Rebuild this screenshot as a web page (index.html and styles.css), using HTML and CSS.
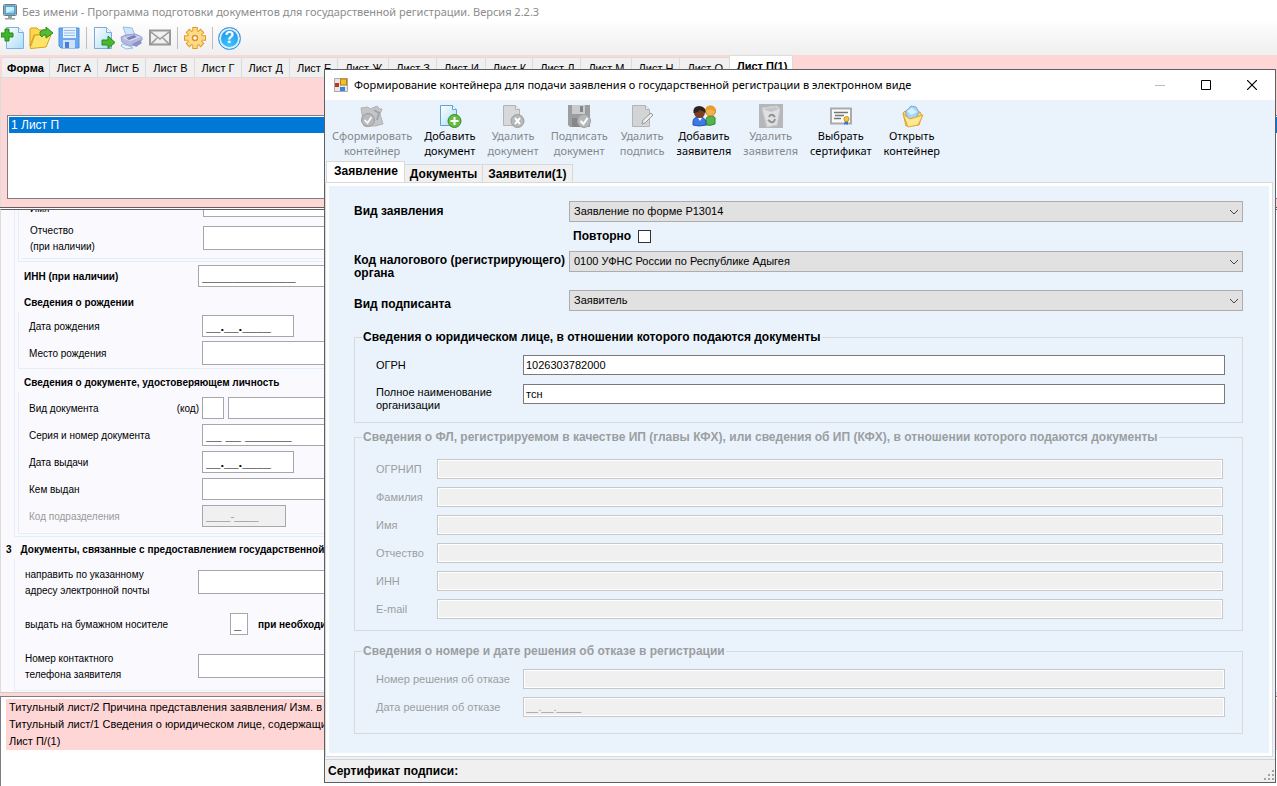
FILE: index.html
```html
<!DOCTYPE html>
<html lang="ru">
<head>
<meta charset="utf-8">
<title>Программа подготовки документов для государственной регистрации</title>
<link rel="stylesheet" href="styles.css">
</head>
<body>
<main class="window">
  <header class="titlebar">
    <svg width="16" height="16" viewBox="0 0 16 16"><rect x="1.500" y=".5" width="13" height="11" rx="1" fill="#d9dde0" stroke="#74797d"/><rect x="3" y="2" width="10" height="8" fill="#8fd3f5" stroke="#2778ad"/><path d="M4 3h8v3l-8 3z" fill="#c9effd"/><path d="M6 12h4v2h3v1.500H3V14h3z" fill="#9ba1a5"/></svg>
    <span>Без имени - Программа подготовки документов для государственной регистрации. Версия 2.2.3</span>
  </header>

  <nav class="toolbar">
    <button aria-label="Создать"><svg width="24" height="24" viewBox="0 0 24 24"><defs><linearGradient id="page" x2="1" y2="1"><stop offset="0" stop-color="#fff"/><stop offset="1" stop-color="#a9dcf6"/></linearGradient></defs><path d="M5.500 1.500h12l5 5v16h-17z" fill="url(#page)" stroke="#79b3dd"/><path d="M17.500 1.500v5h5" fill="#e9f6fd" stroke="#79b3dd"/><path d="M4 3h4v4h4v4H8v4H4v-4H0V7h4z" fill="#43b52d" stroke="#248a1a"/></svg></button>
    <button aria-label="Открыть"><svg width="24" height="24" viewBox="0 0 24 24"><path d="M1 3l1-1h6l2 2h8v5H5L1 20z" fill="#ffd84d" stroke="#d99a12"/><path d="M1 22L6 9h16l-5 12-15 1.500z" fill="#ffe46a" stroke="#dca017"/><path d="M11 6c3-3 5-2 6-2V1l7 6-7 5V9c-2 0-3 0-4 2-2-1-2-3-2-5z" fill="#55bb35" stroke="#2c8a1d"/></svg></button>
    <button aria-label="Сохранить"><svg width="24" height="24" viewBox="0 0 24 24"><path d="M2 2h20v20H4l-2-2z" fill="#6ba8f2" stroke="#4f8edc"/><rect x="6" y="2" width="13" height="10" fill="#e8f3ff"/><path d="M7 4.500h11M7 7h11M7 9.500h11" stroke="#96bce8"/><rect x="6" y="14" width="12" height="8" fill="#cfe1fa"/><rect x="8" y="16" width="4" height="6" fill="#4c7fd0"/></svg></button>
    <i class="sep"></i>
    <button aria-label="Экспорт"><svg width="24" height="24" viewBox="0 0 24 24"><path d="M2.500 1.500h12l5 5v16h-17z" fill="url(#page)" stroke="#79a9dd"/><path d="M14.500 1.500v5h5" fill="#e9f6fd" stroke="#79b3dd"/><path d="M10 14h6v-4l7 6.500-7 6V19h-6z" fill="#48b92e" stroke="#268c1a"/></svg></button>
    <button aria-label="Печать"><svg width="24" height="24" viewBox="0 0 24 24"><path d="M3 1l9 1 3 7-8 3z" fill="#cfe5fb" stroke="#9abde6"/><path d="M1 11l5-2 9-1 5 2q3 1 2 4l-5 5-8 1-7-4z" fill="#b4b9e2" stroke="#989dcc"/><path d="M2 12l8 3 11-4-7-2z" fill="#d6daf3"/><path d="M6 12l8-3 3 2-8 3z" fill="#7a80b4"/><path d="M2 18l7 2 4 2-7 1-5-3z" fill="#edf4ff" stroke="#9abde6"/><path d="M12 18l8-4 2 3-6 4z" fill="#8a92c8"/></svg></button>
    <button aria-label="Отправить"><svg width="24" height="24" viewBox="0 0 24 24"><rect x="2" y="4.500" width="20" height="14" fill="#f0f0f0" stroke="#989898" stroke-width="2"/><path d="M3 6l9 7 9-7M3 18l6-6M21 18l-6-6" fill="none" stroke="#999" stroke-width="1.500"/></svg></button>
    <i class="sep"></i>
    <button aria-label="Настройки"><svg width="24" height="24" viewBox="0 0 24 24"><g stroke="#e09a26" stroke-width="5.500"><path d="M12 1v22M1 12h22M4.500 4.500l15 15M19.500 4.500l-15 15"/></g><g stroke="#ffd77c" stroke-width="3.500"><path d="M12 2v20M2 12h20M5.200 5.200l13.600 13.600M18.800 5.200L5.200 18.800"/></g><circle cx="12" cy="12" r="7" fill="#ffdc8a"/><circle cx="12" cy="12" r="2.500" fill="#fff" stroke="#d9942a" stroke-width="1.500"/></svg></button>
    <i class="sep"></i>
    <button class="help" aria-label="Справка"><span>?</span></button>
  </nav>

  <section class="pages">
    <div class="sheet-tabs">
      <button class="bold">Форма</button><button>Лист А</button><button>Лист Б</button><button>Лист В</button><button>Лист Г</button><button>Лист Д</button><button>Лист Е</button><button>Лист Ж</button><button>Лист З</button><button>Лист И</button><button>Лист К</button><button>Лист Л</button><button>Лист М</button><button>Лист Н</button><button>Лист О</button><button class="bold current">Лист П(1)</button>
    </div>
    <div class="sheet-area">
      <ul class="sheet-list"><li>1 Лист П</li></ul>
    </div>
  </section>

  <form class="form-panel">
    <div class="frame person">
      <div class="frame name-frame">
        <div class="frame name-inner">
          <div class="row first"><label for="fn">Имя</label><input id="fn"></div>
          <div class="row tall"><label for="mn">Отчество<br>(при наличии)</label><input id="mn"></div>
        </div>
      </div>
      <div class="row inn"><label for="inn" class="strong">ИНН (при наличии)</label><input id="inn" class="mask long" value="____________"></div>
      <h3>Сведения о рождении</h3>
      <div class="frame birth">
        <div class="row"><label for="bd">Дата рождения</label><input id="bd" class="mask date" value="__.__.____"></div>
        <div class="row tall"><label for="bp">Место рождения</label><input id="bp"></div>
      </div>
      <h3>Сведения о документе, удостоверяющем личность</h3>
      <div class="frame doc">
        <div class="row"><label for="dt">Вид документа <span>(код)</span></label><input id="dt" class="code"><input aria-label="Наименование документа"></div>
        <div class="row"><label for="sn">Серия и номер документа</label><input id="sn" class="mask long" value="__ __ ______"></div>
        <div class="row"><label for="dd">Дата выдачи</label><input id="dd" class="mask date" value="__.__.____"></div>
        <div class="row"><label for="by">Кем выдан</label><input id="by"></div>
        <div class="row off"><label for="dc">Код подразделения</label><input id="dc" class="dept" value="____-____" disabled></div>
      </div>
    </div>
    <h3 class="numbered"><span>3</span>Документы, связанные с предоставлением государственной услуги</h3>
    <div class="frame delivery">
      <div class="row tall"><label for="em">направить по указанному<br>адресу электронной почты</label><input id="em"></div>
      <div class="row paper"><label for="pp">выдать на бумажном носителе</label><input id="pp" class="flag mask" value="_"><b>при необходимости</b></div>
      <div class="row tall"><label for="ph">Номер контактного<br>телефона заявителя</label><input id="ph"></div>
    </div>
  </form>

  <section class="errors">
    <ul>
      <li>Титульный лист/2 Причина представления заявления/ Изм. в учредительный документ</li>
      <li>Титульный лист/1 Сведения о юридическом лице, содержащиеся в ЕГРЮЛ</li>
      <li>Лист П/(1)</li>
    </ul>
  </section>
</main>

<div class="dialog" role="dialog" aria-labelledby="dlg-title">
  <header class="dlg-title">
    <svg width="14" height="14" viewBox="0 0 14 14"><path d="M.5.5h13v13H.5z" fill="#e6e6e6" stroke="#aaa"/><rect x="1" y="5" width="4" height="4" fill="#c93420"/><rect x="6.500" y="1" width="6" height="6" fill="#f5bf2a" stroke="#b98208"/><rect x="6" y="9" width="5" height="4" fill="#3f7fe8"/></svg>
    <span id="dlg-title">Формирование контейнера для подачи заявления о государственной регистрации в электронном виде</span>
    <div class="win-buttons">
      <button aria-label="Свернуть" disabled><svg width="10" height="10"><path d="M0 5.500h10" stroke="#bdbdbd"/></svg></button>
      <button aria-label="Развернуть"><svg width="10" height="10"><path d="M.5.5h9v9h-9z" fill="none" stroke="#000"/></svg></button>
      <button aria-label="Закрыть"><svg width="10" height="10"><path d="M0 0l10 10M10 0L0 10" stroke="#000" stroke-width="1.200"/></svg></button>
    </div>
  </header>

  <nav class="actions">
    <button disabled><svg width="24" height="24" viewBox="0 0 24 24"><path d="M1 4l7-1 2 2 7-3 3 3h2l-2 5 3 10-8 2H4z" fill="#c3c5c8" stroke="#b0b2b5"/><path d="M14 6l5 3-2 7" fill="none" stroke="#a2a4a7" stroke-width="2"/><circle cx="8" cy="16" r="6.500" fill="#b7b9bc" stroke="#999b9e"/><path d="M4.500 16l3 3 4-6" fill="none" stroke="#f4f4f4" stroke-width="2"/></svg>Сформировать<br>контейнер</button>
    <button><svg width="24" height="24" viewBox="0 0 24 24"><path d="M2.500 1.500h12l4 4v16h-16z" fill="url(#page)" stroke="#5ba5d2"/><path d="M14.500 1.500v4h4" fill="#fff" stroke="#5ba5d2"/><circle cx="16.500" cy="17" r="6.500" fill="#66bd3e" stroke="#338b2b"/><path d="M16.500 13v8M12.500 17h8" stroke="#fff" stroke-width="2"/></svg>Добавить<br>документ</button>
    <button disabled><svg width="24" height="24" viewBox="0 0 24 24"><path d="M2.500 1.500h12l4 4v16h-16z" fill="#d6d8da" stroke="#b2b4b6"/><path d="M14.500 1.500v4h4" fill="#eee" stroke="#b2b4b6"/><circle cx="16.500" cy="17" r="6.500" fill="#b5b7b9" stroke="#9c9ea0"/><path d="M14 14l5 6M19 14l-5 6" stroke="#fff" stroke-width="2"/></svg>Удалить<br>документ</button>
    <button disabled><svg width="24" height="24" viewBox="0 0 24 24"><path d="M1 1h22v22H3l-2-2z" fill="#9b9d9f"/><path d="M5 1h13v9H5z" fill="#c9cbcd"/><path d="M13 2h3v6h-3zM5 14h11v9H5z" fill="#858789"/><circle cx="17" cy="17" r="6.500" fill="#b5b7b9" stroke="#a0a2a4"/><path d="M13.500 17l3 3 4-6" fill="none" stroke="#fff" stroke-width="2"/></svg>Подписать<br>документ</button>
    <button disabled><svg width="24" height="24" viewBox="0 0 24 24"><path d="M2.500 1.500h13l4 4v17h-17z" fill="#d2d4d6" stroke="#b2b4b6"/><path d="M15.500 1.500v4h4" fill="#eee" stroke="#b2b4b6"/><path d="M12 20l1-4 8-7 2 2-8 8z" fill="#eee" stroke="#98999b"/></svg>Удалить<br>подпись</button>
    <button><svg width="24" height="24" viewBox="0 0 24 24"><path d="M14 21v-5q0-4 5-4t4 4v4q-4 2-9 1" fill="#55b54a" stroke="#2d8a30"/><circle cx="18.500" cy="7" r="5" fill="#f2b254" stroke="#c97a1c"/><path d="M13.500 7q0-6 6-5 5 1 4 6-5-4-10-1" fill="#e9a02a"/><path d="M1 21v-3q0-5 6-5t7 5v3q-7 2-13 0" fill="#3c7ae8" stroke="#2150b5"/><circle cx="7.500" cy="8.500" r="5.500" fill="#7c3f22"/><path d="M1.500 9q-1-7 6-7 7 1 6 7-2-2-6-3-2 3-6 3" fill="#2c221e"/><path d="M6 14l2 3 2-3z" fill="#fff"/></svg>Добавить<br>заявителя</button>
    <button disabled><svg width="24" height="24" viewBox="0 0 24 24"><path d="M0 0h24v24H0z" fill="#b5b7b9"/><path d="M3 4l15-2 3 3-3 16-10 2z" fill="#dfe0e1" stroke="#cacccd"/><path d="M4 5l8 3 8-3-3-2z" fill="#c2c4c6"/><path d="M10 13q1-3 4-2l2 2M16 15q-1 4-4 3l-3-2" fill="none" stroke="#8f9193" stroke-width="2"/></svg>Удалить<br>заявителя</button>
    <button><svg width="24" height="24" viewBox="0 0 24 24"><path d="M2 4.500h20v15H2z" fill="#fafafa" stroke="#a9abad" stroke-width="2"/><path d="M5 8.500h14M6 11.500h9M5 14.500h7" stroke="#737578" stroke-width="1.500"/><path d="M16 16l-1 5 2-1 2 1v-5z" fill="#3671d5"/><circle cx="17.500" cy="15" r="2.500" fill="#f6c738" stroke="#c8971f"/></svg>Выбрать<br>сертификат</button>
    <button><svg width="24" height="24" viewBox="0 0 24 24"><path d="M3 9l2-2 5 2 10-1 2 4-3 9-13 1z" fill="#f9d66a" stroke="#d9a32a"/><path d="M6 7l5-5 5 1 3 5-3 6-6 1-4-4z" fill="#a7d5f7" stroke="#74abdc"/><path d="M7 7l5-3 5 4-6 3z" fill="#d9f0ff"/><path d="M3 10l7 5 13-4-5 10-10 2z" fill="#ffe892" stroke="#dca936"/></svg>Открыть<br>контейнер</button>
  </nav>

  <div class="dlg-tabs">
    <button class="current">Заявление</button><button>Документы</button><button>Заявители(1)</button>
  </div>

  <form class="dlg-page">
    <div class="top-fields">
      <label for="kind">Вид заявления</label>
      <div class="select"><select id="kind"><option>Заявление по форме P13014</option></select><svg width="10" height="6"><path d="M1 1l4 4 4-4" fill="none" stroke="#444"/></svg></div>
      <label class="again">Повторно <input type="checkbox"></label>
      <label for="organ" class="organ-label">Код налогового (регистрирующего) органа</label>
      <div class="select organ"><select id="organ"><option>0100 УФНС России по Республике Адыгея</option></select><svg width="10" height="6"><path d="M1 1l4 4 4-4" fill="none" stroke="#444"/></svg></div>
      <label for="signer" class="signer">Вид подписанта</label>
      <div class="select"><select id="signer"><option>Заявитель</option></select><svg width="10" height="6"><path d="M1 1l4 4 4-4" fill="none" stroke="#444"/></svg></div>
    </div>

    <fieldset class="wide-labels">
      <legend>Сведения о юридическом лице, в отношении которого подаются документы</legend>
      <div class="field"><label for="ogrn">ОГРН</label><input id="ogrn" value="1026303782000"></div>
      <div class="field"><label for="org" class="two-line">Полное наименование организации</label><input id="org" value="тсн"></div>
    </fieldset>

    <fieldset class="person-set" disabled>
      <legend>Сведения о ФЛ, регистрируемом в качестве ИП (главы КФХ), или сведения об ИП (КФХ), в отношении которого подаются документы</legend>
      <div class="field"><label for="p1">ОГРНИП</label><input id="p1"></div>
      <div class="field"><label for="p2">Фамилия</label><input id="p2"></div>
      <div class="field"><label for="p3">Имя</label><input id="p3"></div>
      <div class="field"><label for="p4">Отчество</label><input id="p4"></div>
      <div class="field"><label for="p5">ИНН</label><input id="p5"></div>
      <div class="field"><label for="p6">E-mail</label><input id="p6"></div>
    </fieldset>

    <fieldset class="wide-labels refusal" disabled>
      <legend>Сведения о номере и дате решения об отказе в регистрации</legend>
      <div class="field"><label for="r1">Номер решения об отказе</label><input id="r1"></div>
      <div class="field"><label for="r2">Дата решения об отказе</label><input id="r2" value="__.__.____"></div>
    </fieldset>
  </form>

  <footer class="status">
    <span>Сертификат подписи:</span>
    <svg width="12" height="12" fill="#a3a3a3"><path d="M9 0h2v2H9zM5 4h2v2H5zM9 4h2v2H9zM1 8h2v2H1zM5 8h2v2H5zM9 8h2v2H9z"/></svg>
  </footer>
</div>
</body>
</html>
```
FILE: styles.css
```css
* { box-sizing: border-box; }
body {
  margin: 0;
  position: relative;
  min-height: 100vh;
  overflow: hidden;
  background: #fff;
  color: #000;
  font: 11px/14px "Liberation Sans", Arial, sans-serif;
}
button, input, select { font: inherit; color: inherit; }
button { margin: 0; padding: 0; border: 0; background: none; }
ul { margin: 0; padding: 0; list-style: none; }
svg { display: block; flex: none; }

/* main window */
.window { display: flex; flex-direction: column; min-height: 100vh; }
.titlebar {
  display: flex; align-items: center; gap: 4px;
  height: 23px; padding-left: 2px;
  color: #8c8c8c;
  font-family: "Noto Sans", "Open Sans", sans-serif;
  white-space: nowrap;
}
.toolbar {
  display: flex; align-items: center; gap: 4px;
  height: 32px; padding: 0 0 2px 1px;
  background: linear-gradient(#fdfdfd, #efefef);
}
.sep { width: 1px; height: 22px; margin: 0 1px; background: #bdbdbd; }
.help {
  width: 23px; height: 23px;
  border: 1px solid #3f93e0; border-radius: 50%;
  background: radial-gradient(circle at 50% 80%, #38c6fa, #1f86e6);
  box-shadow: inset 0 0 0 2px #d7efff;
  color: #fff;
  font-size: 16px; font-weight: bold; line-height: 20px;
}
.pages { padding-top: 1px; background: #ffd6d6; border-bottom: 1px solid #5f5f5f; }
.sheet-tabs { display: flex; align-items: flex-end; height: 21px; padding-left: 2px; white-space: nowrap; }
.sheet-tabs button {
  height: 20px; padding: 1px 6px 0 7px;
  background: #f0f0f0;
  border: 1px solid #dcdcdc; border-width: 1px 1px 0 0;
}
.sheet-tabs .bold { padding: 1px 5px 0; font-weight: bold; }
.sheet-tabs .current { height: 22px; padding: 0 5px 2px 7px; background: #fff; }
.sheet-area { padding: 37px 0 8px 6px; border-left: 1px solid #dcdcdc; border-top: 1px solid #dcdcdc; }
.sheet-list {
  min-height: 84px; padding: 1px 0 0 1px;
  border: 1px solid #7a7f87; border-right: 0;
  background: #fff;
}
.sheet-list li { padding: 1px 2px; background: #0078d7; color: #fff; font-size: 12px; line-height: 14px; }

/* application form */
.form-panel {
  margin-top: 1px; padding: 0 8px 1px 0;
  border-top: 1px solid #5f5f5f; border-left: 1px solid #dcdcdc; border-bottom: 1px solid #ccc;
  background: #f9f9fe;
  overflow: hidden;
  font-size: 10px; line-height: 16px;
}
.frame { border: solid #e2eef9; border-width: 0 0 1px 1px; }
.person { margin-left: 13px; padding: 0 0 2px 3px; }
.name-frame { padding: 0 0 2px 3px; }
.name-inner { padding-bottom: 8px; border-left: 0; display: grid; gap: 9px; margin-top: -15px; }
.row { display: flex; align-items: center; min-height: 22px; }
.row label { display: flex; flex: none; padding-top: 2px; }
.row input {
  flex: 1; min-width: 0; height: 22px; padding: 0 3px;
  border: 1px solid #a6a6ab; background: #fff;
}
.row.tall input { height: 24px; }
.row.tall label { margin: -5px 0; }
.row .mask { font-size: 13px; font-weight: bold; }
.row .long { font-size: 14px; }
.name-inner label { width: 181px; padding-left: 8px; }
.name-inner .tall label { display: block; }
.row.first label { padding-top: 6px; }
.inn { margin-top: 3px; }
.inn label { width: 180px; padding-left: 6px; }
.strong, h3 { font-weight: bold; }
h3 { margin: 9px 0 1px 6px; font-size: 10px; line-height: 14px; white-space: nowrap; }
.birth { display: grid; gap: 4px; padding: 4px 0 3px; }
.birth + h3 { margin-top: 7px; }
.birth label, .doc label { width: 183px; padding-left: 10px; }
.doc { display: grid; gap: 5px; padding: 6px 0; }
.doc label span { margin-left: auto; padding-right: 3px; }
.row .date { flex: 0 0 92px; }
.row .code { flex: 0 0 22px; margin-right: 4px; }
.row .dept { flex: 0 0 84px; background: #f0f0f0; font-size: 11px; }
.off { color: #9a9a9a; }
.numbered { display: flex; gap: 9px; margin: 6px 0 2px 5px; }
.delivery { display: grid; gap: 19px; margin-left: 13px; padding: 11px 0 12px; }
.delivery label { display: block; width: 183px; padding-left: 10px; }
.paper label { width: 215px; }
.row .flag { flex: 0 0 18px; }
.paper b { margin-left: 10px; padding-top: 2px; }

/* error list */
.errors {
  flex: 1; margin-top: 3px; padding: 2px 0 0 5px;
  border: 1px solid #7a7f87; border-width: 1px 0 0 1px;
  background: #fff;
  box-shadow: 0 -3px #ffd6d6;
}
.errors ul { background: #ffd6d6; padding-left: 3px; }
.errors li { line-height: 17px; white-space: nowrap; }

/* dialog */
.dialog {
  position: absolute; left: 324px; right: 1px; top: 69px;
  border: 1px solid #5c5f63;
  background: #eaf3fc;
}
.dlg-title {
  display: flex; align-items: center; gap: 6px;
  height: 30px; padding-left: 9px;
  background: #fff;
  font-family: "Noto Sans", "Open Sans", sans-serif;
  white-space: nowrap;
}
.win-buttons { display: flex; margin-left: auto; }
.win-buttons button { display: grid; place-items: center; width: 46px; height: 29px; }
.actions {
  display: flex; gap: 12px;
  padding: 3px 0 3px 7px; min-height: 61px;
  font: 11px/15px "Noto Sans", "Open Sans", sans-serif;
  white-space: nowrap;
}
.actions svg { margin: 0 auto; }
.actions button:disabled { color: #84888c; }
.dlg-tabs { display: flex; align-items: flex-end; height: 21px; padding-left: 1px; font-size: 12px; font-weight: bold; }
.dlg-tabs button { height: 18px; padding: 0 5px; background: #f0f0f0; border: 1px solid #d9d9d9; border-width: 1px 1px 0 0; }
.dlg-tabs .current { height: 21px; padding: 0 6px 2px 7px; background: #fff; border-left-width: 1px; }
.dlg-page {
  margin-right: 2px; padding: 16px 29px 22px 28px;
  border: 1px solid #d9d9d9;
  box-shadow: inset 0 0 0 3px #fff;
}
.top-fields {
  display: grid; grid-template-columns: 215px 1fr;
  font-size: 12px; font-weight: bold; line-height: 13px;
  padding-top: 2px;
}
.top-fields > label { align-self: center; }
.top-fields > .organ-label { align-self: start; padding-top: 3px; }
.select { position: relative; font-size: 11px; font-weight: normal; }
.select select {
  display: block; width: 100%; height: 21px; padding: 0 4px;
  appearance: none; border: 1px solid #adadad; border-radius: 0; background: #e1e1e1;
}
.select svg { position: absolute; right: 4px; top: 8px; pointer-events: none; }
.top-fields .again { grid-column: 2; display: flex; align-items: center; gap: 7px; height: 29px; padding-left: 4px; }
.again input { appearance: none; width: 13px; height: 13px; margin: 0; border: 1px solid #333; background: #fff; }
.organ { margin-bottom: 18px; }
.top-fields .signer { padding-top: 8px; }
fieldset { display: grid; gap: 8px; margin: 20px 0 0; padding: 11px 17px 18px 21px; border: 1px solid #d6dadd; min-width: 0; }
legend { margin-left: -14px; padding: 0 1px; font-size: 12px; font-weight: bold; line-height: 13px; white-space: nowrap; }
fieldset:disabled { color: #9b9ea1; }
.field { display: flex; align-items: center; height: 20px; line-height: 13px; }
.field label { flex: none; width: 61px; }
.wide-labels .field label { width: 147px; }
.wide-labels .field .two-line { align-self: flex-start; padding: 2px 20px 0 0; }
.field input { flex: 1; min-width: 0; height: 20px; padding: 0 2px; border: 1px solid #7a7a7a; background: #fff; }
.field input:disabled { border-color: #c8c8c8; background: #f0f0f0; box-shadow: inset 0 0 0 1px #fff; }
.wide-labels .field + .field { margin-top: 1px; }
.person-set { margin-top: 8px; padding: 15px 19px 11px 21px; }
.refusal { margin-top: 14px; padding-bottom: 16px; }
.wide-labels.refusal .field + .field { margin-top: 0; }
.status { display: flex; align-items: center; justify-content: space-between; height: 23px; margin-top: 2px; padding: 0 0 0 3px; border-top: 1px solid #d4d4d4; background: #f0f0f0; font-size: 12px; font-weight: bold; }
.status svg { align-self: flex-end; }
```
